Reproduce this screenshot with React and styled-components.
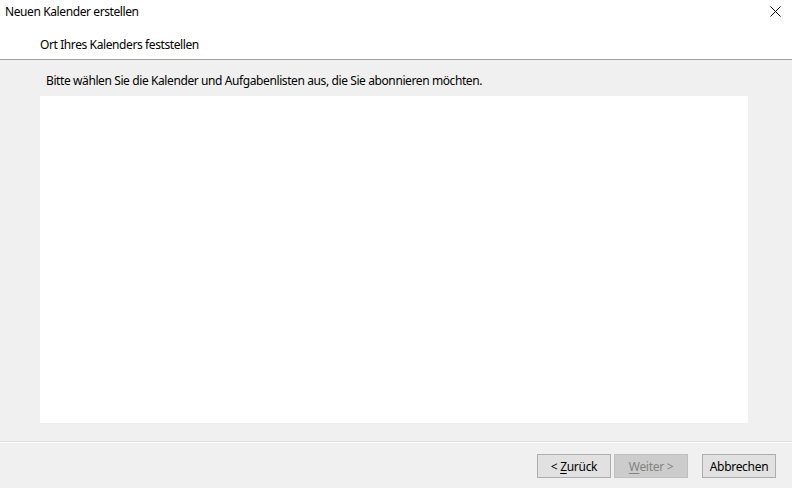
import React from 'react';
import styled, { createGlobalStyle } from 'styled-components';

const Global = createGlobalStyle`
	html, body {
		margin: 0;
		padding: 0;
		background: #f0f0f0;
	}
	body {
		font-family: 'Noto Sans', 'Open Sans', sans-serif;
		font-size: 12px;
		letter-spacing: -0.4px;
		color: #000;
	}
`;

const Dialog = styled.div`
	width: 792px;
	height: 488px;
	display: flex;
	flex-direction: column;
	background: #f0f0f0;
	overflow: hidden;
`;

const Header = styled.header`
	height: 59px;
	background: #fff;
	border-bottom: 1px solid #a0a0a0;
	display: flex;
	flex-direction: column;
`;

const TitleRow = styled.div`
	display: flex;
	justify-content: space-between;
	align-items: center;
	height: 23px;
	padding-left: 5px;
	padding-right: 10px;
`;

const Title = styled.span`
	font-size: 12px;
`;

const Close = styled.button`
	border: none;
	background: none;
	padding: 0;
	width: 14px;
	height: 14px;
	display: flex;
	align-items: center;
	justify-content: center;
`;

const Subtitle = styled.div`
	padding-left: 40px;
	margin-top: 13px;
	font-size: 12px;
`;

const Body = styled.main`
	flex: 1;
	display: flex;
	flex-direction: column;
	padding: 13px 44px 0 40px;
`;

const Prompt = styled.p`
	margin: 0 0 0 6px;
	height: 23px;
	line-height: 16px;
`;

const ListBox = styled.div`
	height: 327px;
	background: #fff;
`;

const Footer = styled.footer`
	height: 44px;
	border-top: 1px solid #dfdfdf;
	box-shadow: inset 0 1px 0 #fff;
	display: flex;
	justify-content: flex-end;
	align-items: center;
	padding-right: 16px;
	padding-top: 2px;
`;

const Button = styled.button`
	width: 74px;
	height: 24px;
	margin-left: ${(p) => p.gap || 3}px;
	font-family: inherit;
	font-size: 12px;
	letter-spacing: -0.3px;
	color: ${(p) => (p.disabled ? '#838383' : '#000')};
	background: ${(p) => (p.disabled ? '#cccccc' : '#e1e1e1')};
	border: 1px solid ${(p) => (p.disabled ? '#bfbfbf' : '#adadad')};
	padding: 0;
	u {
		text-decoration-thickness: 1px;
		text-underline-offset: 2px;
	}
`;

export default function App() {
	return (
		<Dialog>
			<Global />
			<Header>
				<TitleRow>
					<Title>Neuen Kalender erstellen</Title>
					<Close aria-label='Schließen'>
						<svg width='11' height='11' viewBox='0 0 11 11'>
							<path d='M0.5 0.5 L10.5 10.5 M10.5 0.5 L0.5 10.5' stroke='#000' strokeWidth='1' />
						</svg>
					</Close>
				</TitleRow>
				<Subtitle>Ort Ihres Kalenders feststellen</Subtitle>
			</Header>
			<Body>
				<Prompt>Bitte wählen Sie die Kalender und Aufgabenlisten aus, die Sie abonnieren möchten.</Prompt>
				<ListBox />
			</Body>
			<Footer>
				<Button>
					&lt; <u>Z</u>urück
				</Button>
				<Button disabled>
					<u>W</u>eiter &gt;
				</Button>
				<Button gap={14}>Abbrechen</Button>
			</Footer>
		</Dialog>
	);
}
